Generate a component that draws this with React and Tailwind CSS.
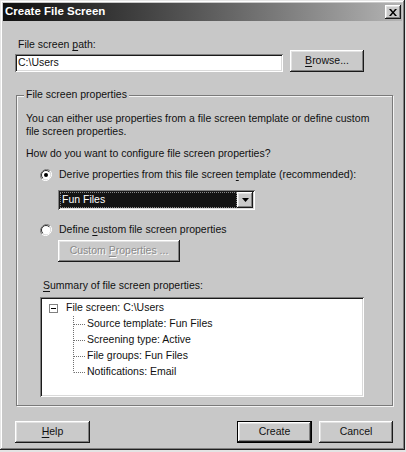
import React from "react";

const raised =
  "bg-[#cacaca] shadow-[inset_-1px_-1px_#1a1a1a,inset_1px_1px_#ffffff,inset_-2px_-2px_#808080,inset_2px_2px_#e2e2e2]";
const sunken =
  "shadow-[inset_1px_1px_#808080,inset_-1px_-1px_#ffffff,inset_2px_2px_#1a1a1a,inset_-2px_-2px_#dadada]";

function Radio({ checked }) {
  return (
    <svg width="12" height="12" viewBox="0 0 12 12" className="shrink-0">
      <path d="M10.2 1.8 A6 6 0 0 0 1.8 10.2" fill="none" stroke="#808080" strokeWidth="1" />
      <path d="M1.8 10.2 A6 6 0 0 0 10.2 1.8" fill="none" stroke="#ffffff" strokeWidth="1" />
      <circle cx="6" cy="6" r="4.5" fill="#ffffff" />
      <path d="M9.2 2.8 A4.5 4.5 0 0 0 2.8 9.2" fill="none" stroke="#303030" strokeWidth="1" />
      {checked && <circle cx="6" cy="6" r="2" fill="#000" />}
    </svg>
  );
}

function TreeLine({ last }) {
  return (
    <svg width="13" height="16" viewBox="0 0 13 16" className="shrink-0">
      <line x1="0.5" y1="0" x2="0.5" y2={last ? 8.5 : 16} stroke="#707070" strokeDasharray="1 1" />
      <line x1="1" y1="8.5" x2="12" y2="8.5" stroke="#707070" strokeDasharray="1 1" />
    </svg>
  );
}

export default function App() {
  const children = [
    "Source template: Fun Files",
    "Screening type: Active",
    "File groups: Fun Files",
    "Notifications: Email",
  ];
  return (
    <div className="w-[406px] h-[452px] bg-[#e4e4e4] font-['Liberation_Sans',Arial,sans-serif] text-[10.5px] text-[#111]">
      <div className="w-[405px] h-[450px] bg-[#c8c8c8] p-[3px] flex flex-col shadow-[inset_-1px_-1px_#202020,inset_1px_1px_#e6e6e6,inset_-2px_-2px_#808080,inset_2px_2px_#ffffff]">
        {/* Title bar */}
        <div className="h-[18px] flex items-center justify-between bg-gradient-to-r from-[#101010] via-[#5a5a5a] to-[#b4b4b4] pl-[2px] pr-[1px]">
          <span className="text-white font-bold text-[11.5px] leading-none">Create File Screen</span>
          <div className={`w-[16px] h-[14px] flex items-center justify-center ${raised}`}>
            <svg width="8" height="7" viewBox="0 0 8 7">
              <path d="M0 0h2l2 2.5L6 0h2L5 3.5 8 7H6L4 4.5 2 7H0l3-3.5z" fill="#000" />
            </svg>
          </div>
        </div>

        {/* Body */}
        <div className="flex flex-col pl-[12px]">
          <div className="mt-[17px] h-[12px] leading-[12px] pl-[3px]">
            File screen <span className="underline underline-offset-2">p</span>ath:
          </div>
          <div className="h-[22px] flex items-end">
            <div className={`w-[268px] h-[18px] bg-white flex items-center pl-[3px] ${sunken}`}>C:\Users</div>
            <div className={`ml-[7px] w-[74px] h-[22px] flex items-center justify-center ${raised}`}>
              <span>
                <span className="underline underline-offset-2">B</span>rowse...
              </span>
            </div>
          </div>

          {/* Group box */}
          <div className="relative mt-[23px] ml-[1px] w-[377px] h-[311px] border border-[#7a7a7a] shadow-[inset_1px_1px_#f4f4f4,1px_1px_#f4f4f4] flex flex-col pl-[9px] pt-[16px]">
            <span className="absolute left-[7px] top-[-8px] px-[2px] bg-[#c8c8c8] leading-[13px]">
              File screen properties
            </span>
            <p className="leading-[13px]">
              You can either use properties from a file screen template or define custom
              <br />
              file screen properties.
            </p>
            <p className="mt-[9px] leading-[13px]">How do you want to configure file screen properties?</p>

            <div className="mt-[8px] ml-[14px] h-[14px] flex items-center gap-[7px]">
              <Radio checked />
              <span>
                Derive properties from this file screen <span className="underline underline-offset-2">t</span>emplate
                (recommended):
              </span>
            </div>

            <div className={`mt-[8px] ml-[32px] w-[197px] h-[20px] bg-white flex items-stretch p-[2px] ${sunken}`}>
              <div className="flex-1 bg-[#141414] text-white flex items-center pl-[2px] outline-1 outline-dotted outline-[#888] -outline-offset-1">
                Fun Files
              </div>
              <div className={`w-[16px] flex items-center justify-center ${raised}`}>
                <svg width="7" height="4" viewBox="0 0 7 4">
                  <path d="M0 0h7L3.5 4z" fill="#000" />
                </svg>
              </div>
            </div>

            <div className="mt-[13px] ml-[14px] h-[14px] flex items-center gap-[7px]">
              <Radio />
              <span>
                Define <span className="underline underline-offset-2">c</span>ustom file screen properties
              </span>
            </div>

            <div
              className={`mt-[3px] ml-[32px] w-[122px] h-[22px] flex items-center justify-center text-[#8a8a8a] [text-shadow:1px_1px_#ffffff] ${raised}`}
            >
              <span>
                Custom <span className="underline underline-offset-2">P</span>roperties ...
              </span>
            </div>

            <div className="mt-[17px] ml-[17px] h-[13px] leading-[13px]">
              <span className="underline underline-offset-2">S</span>ummary of file screen properties:
            </div>

            <div className={`mt-[5px] ml-[14px] w-[324px] h-[100px] bg-white p-[2px] ${sunken}`}>
              <div className="mt-[1px] h-[16px] flex items-center pl-[7px]">
                <svg width="9" height="9" viewBox="0 0 9 9" className="shrink-0">
                  <rect x="0.5" y="0.5" width="8" height="8" fill="#fff" stroke="#808080" />
                  <line x1="2" y1="4.5" x2="7" y2="4.5" stroke="#000" />
                </svg>
                <span className="ml-[8px]">File screen: C:\Users</span>
              </div>
              <div className="flex flex-col">
                {children.map((c, i) => (
                  <div key={c} className="h-[16px] flex items-center pl-[31px]">
                    <TreeLine last={i === children.length - 1} />
                    <span className="ml-[1px]">{c}</span>
                  </div>
                ))}
              </div>
            </div>
          </div>

          {/* Bottom buttons */}
          <div className="mt-[15px] w-[378px] flex justify-between">
            <div className={`w-[75px] h-[22px] flex items-center justify-center ${raised}`}>
              <span>
                <span className="underline underline-offset-2">H</span>elp
              </span>
            </div>
            <div className="flex gap-[7px]">
              <div className="w-[75px] h-[22px] border border-black flex">
                <div className={`flex-1 flex items-center justify-center ${raised}`}>Create</div>
              </div>
              <div className={`w-[74px] h-[22px] flex items-center justify-center ${raised}`}>Cancel</div>
            </div>
          </div>
        </div>
      </div>
    </div>
  );
}
